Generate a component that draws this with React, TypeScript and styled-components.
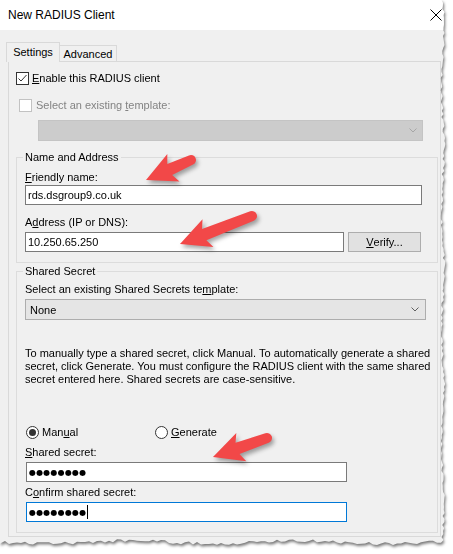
import * as React from 'react';
import styled, { createGlobalStyle } from 'styled-components';

const GlobalStyle = createGlobalStyle`
    html, body {
        margin: 0;
        padding: 0;
        background: #fff;
    }
    body {
        font-family: 'Liberation Sans', Arial, sans-serif;
        font-size: 11px;
        color: #000;
    }
`;

// jagged "torn paper" outline on the right and bottom of the screenshot
function tornEdge(): string {
    let seed = 11;
    const rand = () => {
        seed = (seed * 16807) % 2147483647;
        return seed / 2147483647;
    };
    const pts: string[] = ['0px 0px'];
    for (let y = 0; y <= 540; y += 3) {
        const x = 441.5 + Math.sin(y / 19) * 1.2 + rand() * 2.6;
        pts.push(`${x.toFixed(1)}px ${y}px`);
    }
    for (let x = 441; x >= 0; x -= 4) {
        const y = 540.5 + Math.sin(x / 27) * 1.4 + rand() * 3.2;
        pts.push(`${x}px ${y.toFixed(1)}px`);
    }
    pts.push('0px 544px');
    return pts.join(', ');
}

const TORN = tornEdge();

const Page = styled.div`
    position: relative;
    width: 453px;
    height: 554px;
    overflow: hidden;
    background: #fff;
`;

const Shadow = styled.div`
    filter: drop-shadow(1px 2px 1.5px rgba(0, 0, 0, 0.55));
`;

const Window = styled.div`
    width: 450px;
    height: 549px;
    background: #f0f0f0;
    clip-path: polygon(${TORN});
`;

const TitleBar = styled.div`
    height: 30px;
    background: #fff;
    display: flex;
    align-items: center;
    justify-content: space-between;
    padding: 0 8px;
    font-size: 12px;
`;

const Body = styled.div`
    padding: 12px 0 0 6px;
`;

const TabStrip = styled.div`
    position: relative;
    z-index: 1;
    display: flex;
    align-items: flex-end;
    height: 20px;
`;

type TabProps = { $active?: boolean; $width: number };
const Tab = styled.div<TabProps>`
    box-sizing: border-box;
    width: ${(p: TabProps) => p.$width}px;
    height: ${(p: TabProps) => (p.$active ? 20 : 17)}px;
    margin-left: ${(p: TabProps) => (p.$active ? 0 : -1)}px;
    border: 1px solid #d9d9d9;
    border-bottom: ${(p: TabProps) => (p.$active ? 'none' : '1px solid #d9d9d9')};
    background: #f0f0f0;
    display: flex;
    align-items: center;
    justify-content: center;
    padding-bottom: ${(p: TabProps) => (p.$active ? 1 : 0)}px;
`;

const Panel = styled.div`
    box-sizing: border-box;
    width: 433px;
    margin: -1px 0 0 2px;
    border: 1px solid #d9d9d9;
    padding: 10px 0 3px 0;
`;

type RowProps = { $indent: number; $mt?: number; $gap: number; $disabled?: boolean };
const CheckRow = styled.div<RowProps>`
    display: flex;
    align-items: center;
    gap: ${(p: RowProps) => p.$gap}px;
    height: 13px;
    line-height: 13px;
    margin: ${(p: RowProps) => p.$mt || 0}px 0 0 ${(p: RowProps) => p.$indent}px;
    color: ${(p: RowProps) => (p.$disabled ? '#838383' : '#000')};
`;

type BoxProps = { $disabled?: boolean };
const CheckBox = styled.span<BoxProps>`
    flex: none;
    box-sizing: border-box;
    width: 13px;
    height: 13px;
    border: 1px solid ${(p: BoxProps) => (p.$disabled ? '#c2c2c2' : '#333')};
    background: #fff;
    display: flex;
    align-items: center;
    justify-content: center;
`;

type ComboProps = { $disabled?: boolean; $width: number; $ml: number; $mt: number };
const Combo = styled.div<ComboProps>`
    box-sizing: border-box;
    width: ${(p: ComboProps) => p.$width}px;
    height: 21px;
    margin: ${(p: ComboProps) => p.$mt}px 0 0 ${(p: ComboProps) => p.$ml}px;
    border: 1px solid ${(p: ComboProps) => (p.$disabled ? '#c4c4c4' : '#adadad')};
    background: ${(p: ComboProps) => (p.$disabled ? '#cccccc' : '#e5e5e5')};
    display: flex;
    align-items: center;
    justify-content: space-between;
    padding: 0 ${(p: ComboProps) => (p.$disabled ? 5 : 6)}px 0 4px;
`;

type GroupProps = { $mt: number };
const Group = styled.div<GroupProps>`
    box-sizing: border-box;
    width: 422px;
    margin: ${(p: GroupProps) => p.$mt}px 0 0 7px;
    border: 1px solid #dcdcdc;
    padding: 0 0 10px 8px;
`;

const GroupTitle = styled.div`
    width: fit-content;
    margin: -7px 0 0 -2px;
    padding: 0 2px;
    background: #f0f0f0;
    line-height: 13px;
`;

type LabelProps = { $mt: number };
const Label = styled.div<LabelProps>`
    margin-top: ${(p: LabelProps) => p.$mt}px;
    line-height: 13px;
`;

type BoxFieldProps = { $width: number; $mt?: number; $ml?: number; $focused?: boolean };
const TextBox = styled.div<BoxFieldProps>`
    box-sizing: border-box;
    width: ${(p: BoxFieldProps) => p.$width}px;
    height: 20px;
    margin: ${(p: BoxFieldProps) => p.$mt || 0}px 0 0 ${(p: BoxFieldProps) => p.$ml || 0}px;
    border: 1px solid ${(p: BoxFieldProps) => (p.$focused ? '#0078d7' : '#7a7a7a')};
    background: #fff;
    display: flex;
    align-items: center;
    padding: 0 2px;
    white-space: nowrap;
`;

const Secret = styled.span`
    font-family: 'DejaVu Sans', sans-serif;
    font-size: 8px;
    letter-spacing: 0.2px;
`;

const Caret = styled.span`
    width: 1px;
    height: 14px;
    margin-left: 1px;
    background: #000;
`;

const FieldRow = styled.div`
    display: flex;
    gap: 4px;
    margin-top: 3px;
`;

const Button = styled.div`
    box-sizing: border-box;
    width: 73px;
    height: 20px;
    border: 1px solid #adadad;
    background: #e1e1e1;
    display: flex;
    align-items: center;
    justify-content: center;
`;

const Note = styled.p`
    margin: 27px 0 0;
    line-height: 13px;
`;

const RadioRow = styled.div`
    display: grid;
    grid-template-columns: 129px auto;
    margin: 40px 0 0 1px;
    height: 13px;
    line-height: 13px;
`;

const RadioOption = styled.div`
    display: flex;
    align-items: center;
    gap: 3px;
`;

const RadioCircle = styled.span`
    box-sizing: border-box;
    width: 13px;
    height: 13px;
    border: 1px solid #333;
    border-radius: 50%;
    background: #fff;
    display: flex;
    align-items: center;
    justify-content: center;
`;

const RadioDot = styled.span`
    width: 7px;
    height: 7px;
    border-radius: 50%;
    background: #333;
`;

const Overlay = styled.svg`
    position: absolute;
    left: 0;
    top: 0;
    pointer-events: none;
    filter: drop-shadow(2px 3px 2px rgba(0, 0, 0, 0.35));
`;

function Chevron({ color }: { color: string }) {
    return (
        <svg width="8" height="5" viewBox="0 0 8 5">
            <path d="M0.5 0.5 L4 4 L7.5 0.5" fill="none" stroke={color} strokeWidth="1" />
        </svg>
    );
}

function Arrow({ tip, tail }: { tip: [number, number]; tail: [number, number] }) {
    const dx = tail[0] - tip[0];
    const dy = tail[1] - tip[1];
    const len = Math.hypot(dx, dy);
    const angle = (Math.atan2(dy, dx) * 180) / Math.PI;
    const d = `M0 0 L30 -15 L26 -6 L${len} -5 A5 5 0 0 1 ${len} 5 L26 6 L30 15 Z`;
    return <path d={d} fill="#f24848" transform={`translate(${tip[0]} ${tip[1]}) rotate(${angle})`} />;
}

export default function App(): React.ReactElement {
    return (
        <Page>
            <GlobalStyle />
            <Shadow>
                <Window>
                    <TitleBar>
                        <span>New RADIUS Client</span>
                        <svg width="12" height="12" viewBox="0 0 12 12">
                            <path d="M0.5 0.5 L11.5 11.5 M11.5 0.5 L0.5 11.5" stroke="#000" strokeWidth="1" />
                        </svg>
                    </TitleBar>
                    <Body>
                        <TabStrip>
                            <Tab $active $width={54}>Settings</Tab>
                            <Tab $width={58}>Advanced</Tab>
                        </TabStrip>
                        <Panel>
                            <CheckRow $indent={7} $gap={3}>
                                <CheckBox>
                                    <svg width="11" height="11" viewBox="0 0 11 11">
                                        <path d="M1.5 5.5 L4 8 L9.5 2" fill="none" stroke="#333" strokeWidth="1" />
                                    </svg>
                                </CheckBox>
                                <span><u>E</u>nable this RADIUS client</span>
                            </CheckRow>
                            <CheckRow $indent={10} $mt={14} $gap={4} $disabled>
                                <CheckBox $disabled />
                                <span>Select an existing <u>t</u>emplate:</span>
                            </CheckRow>
                            <Combo $disabled $width={385} $ml={29} $mt={8}>
                                <span />
                                <Chevron color="#a6a6a6" />
                            </Combo>

                            <Group $mt={16}>
                                <GroupTitle>Name and Address</GroupTitle>
                                <Label $mt={7}><u>F</u>riendly name:</Label>
                                <TextBox $width={397} $mt={1}>rds.dsgroup9.co.uk</TextBox>
                                <Label $mt={11}>A<u>d</u>dress (IP or DNS):</Label>
                                <FieldRow>
                                    <TextBox $width={319}>10.250.65.250</TextBox>
                                    <Button><u>V</u>erify...</Button>
                                </FieldRow>
                            </Group>

                            <Group $mt={8}>
                                <GroupTitle>Shared Secret</GroupTitle>
                                <Label $mt={5}>Select an existing Shared Secrets te<u>m</u>plate:</Label>
                                <Combo $width={401} $ml={0} $mt={3}>
                                    <span>None</span>
                                    <Chevron color="#606060" />
                                </Combo>
                                <Note>
                                    To manually type a shared secret, click Manual. To automatically generate a shared
                                    <br />
                                    secret, click Generate. You must configure the RADIUS client with the same shared
                                    <br />
                                    secret entered here. Shared secrets are case-sensitive.
                                </Note>
                                <RadioRow>
                                    <RadioOption>
                                        <RadioCircle>
                                            <RadioDot />
                                        </RadioCircle>
                                        <span>Man<u>u</u>al</span>
                                    </RadioOption>
                                    <RadioOption>
                                        <RadioCircle />
                                        <span><u>G</u>enerate</span>
                                    </RadioOption>
                                </RadioRow>
                                <Label $mt={7}><u>S</u>hared secret:</Label>
                                <TextBox $width={321} $ml={1} $mt={3}>
                                    <Secret>●●●●●●●●</Secret>
                                </TextBox>
                                <Label $mt={4}>C<u>o</u>nfirm shared secret:</Label>
                                <TextBox $width={321} $ml={1} $mt={3} $focused>
                                    <Secret>●●●●●●●●</Secret>
                                    <Caret />
                                </TextBox>
                            </Group>
                        </Panel>
                    </Body>
                </Window>
            </Shadow>
            <Overlay width="453" height="554" viewBox="0 0 453 554">
                <Arrow tip={[146, 180]} tail={[191, 160]} />
                <Arrow tip={[180, 244]} tail={[252, 216]} />
                <Arrow tip={[213, 457]} tail={[267, 438]} />
            </Overlay>
        </Page>
    );
}
